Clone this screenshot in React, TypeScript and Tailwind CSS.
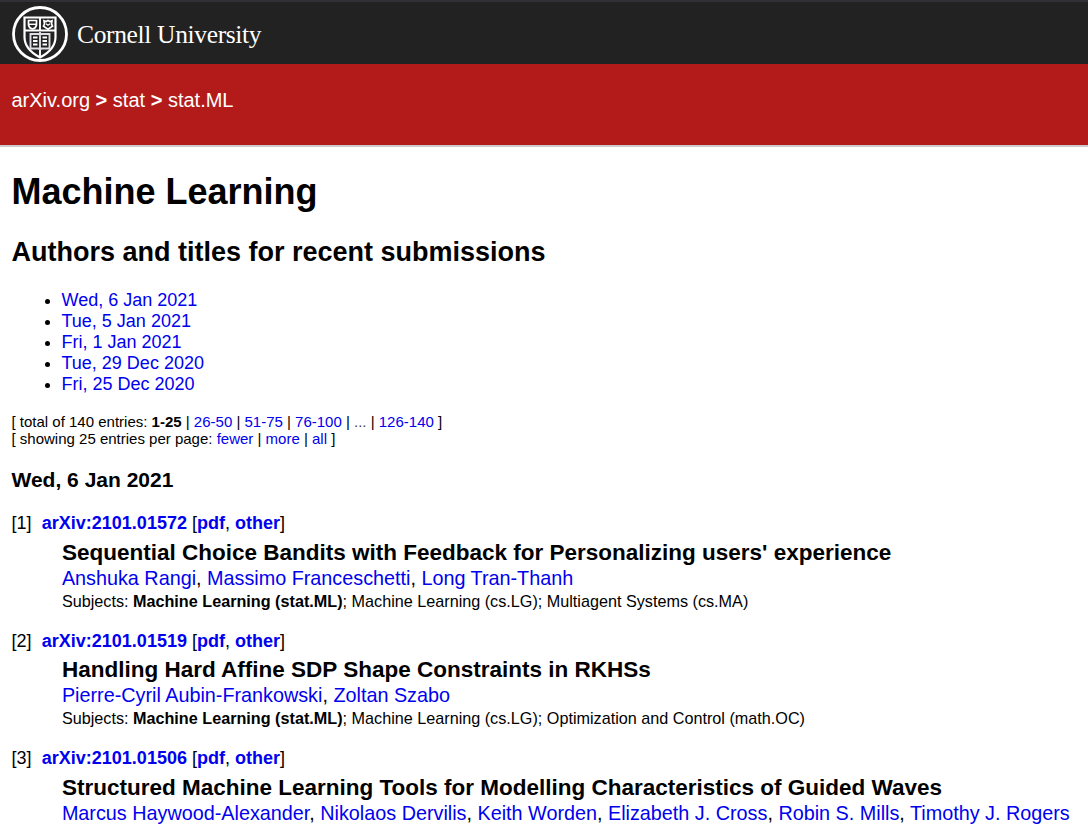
import type { ReactNode } from 'react';

function Seal() {
  return (
    <svg width="56" height="56" viewBox="0 0 56 56" fill="none" stroke="#fff" className="shrink-0">
      <circle cx="28" cy="28" r="26.5" strokeWidth="2.8" />
      <path d="M12.500 11.500h31v19.500c0 9.500-7 16-15.500 20.500c-8.500-4.500-15.500-11-15.500-20.500z" strokeWidth="2.200" />
      <path d="M12 24.500h32M28 11.500v14M28 42v9" strokeWidth="1.900" />
      <path d="M16.500 14.500h8v4.500q-.5 3-4 4q-3.500-1-4-4z" strokeWidth="1.700" />
      <path d="M17 18.300h7" strokeWidth="1.500" />
      <path d="M32 14.800l2 .7 2-1 2 1 2-.7-.5 3 1 2.500-4.500 3-4.500-3 1-2.500z" strokeWidth="1.700" />
      <path d="M34 17.800l2 1.500 2-1.500" strokeWidth="1.300" />
      <path d="M18.500 28h8l1.500 1 1.500-1h8v14.500h-8l-1.500 1-1.500-1h-8zM28 26v17" strokeWidth="1.900" stroke="#dedee4" />
      <path d="M21 31.500h4.500M21 35h4.500M21 38.500h4.500M30.500 31.500h4.500M30.500 35h4.500M30.500 38.500h4.500" strokeWidth="1.800" />
    </svg>
  );
}

function A({ children }: { children: ReactNode }) {
  return <a className="text-[#0000ee]">{children}</a>;
}

const dates = ['Wed, 6 Jan 2021', 'Tue, 5 Jan 2021', 'Fri, 1 Jan 2021', 'Tue, 29 Dec 2020', 'Fri, 25 Dec 2020'];

const entries = [
  {
    id: '2101.01572',
    title: "Sequential Choice Bandits with Feedback for Personalizing users' experience",
    authors: ['Anshuka Rangi', 'Massimo Franceschetti', 'Long Tran-Thanh'],
    subjects: 'Machine Learning (cs.LG); Multiagent Systems (cs.MA)',
  },
  {
    id: '2101.01519',
    title: 'Handling Hard Affine SDP Shape Constraints in RKHSs',
    authors: ['Pierre-Cyril Aubin-Frankowski', 'Zoltan Szabo'],
    subjects: 'Machine Learning (cs.LG); Optimization and Control (math.OC)',
  },
  {
    id: '2101.01506',
    title: 'Structured Machine Learning Tools for Modelling Characteristics of Guided Waves',
    authors: ['Marcus Haywood-Alexander', 'Nikolaos Dervilis', 'Keith Worden', 'Elizabeth J. Cross', 'Robin S. Mills', 'Timothy J. Rogers'],
    subjects: '',
  },
];

export default function App() {
  return (
    <div className="h-[828px] overflow-hidden bg-white font-['Liberation_Sans',Arial,sans-serif] whitespace-nowrap text-black">
      <header className="flex h-16 items-start border-t-2 border-[#303036] bg-[#222] pt-1 pl-3">
        <Seal />
        <span className="mt-[13px] ml-[9px] font-['Liberation_Serif',serif] text-[25.5px] leading-8 tracking-[-0.35px] text-white">Cornell University</span>
      </header>
      <nav className="h-[83px] border-b-2 border-[#ccc] bg-[#b31b1b] pt-6 pl-[11.5px] text-[20px] leading-6 text-white">
        arXiv.org <b>&gt;</b> stat <b>&gt;</b> stat.ML
      </nav>
      <main className="pl-[11.5px]">
        <h1 className="mt-6 text-[36px] leading-[41px] font-bold">Machine Learning</h1>
        <h2 className="mt-6 text-[27px] leading-8 font-bold">Authors and titles for recent submissions</h2>
        <ul className="mt-[22px] list-disc pl-[50px] text-[18px] leading-[21px]">
          {dates.map((d) => <li key={d}><A>{d}</A></li>)}
        </ul>
        <div className="mt-[18px] text-[15px] leading-[17px]">
          <div>[ total of 140 entries: <b>1-25</b> | <A>26-50</A> | <A>51-75</A> | <A>76-100</A> | <span className="text-[#454545]">...</span> | <A>126-140</A> ]</div>
          <div>[ showing 25 entries per page: <A>fewer</A> | <A>more</A> | <A>all</A> ]</div>
        </div>
        <h3 className="mt-[21px] text-[21px] leading-6 font-bold">Wed, 6 Jan 2021</h3>
        <dl className="mt-[21px]">
          {entries.map((e, i) => (
            <div key={e.id} className="h-[117.5px]">
              <dt className="text-[18px] leading-[21px]">
                <span className="inline-block w-[30.3px]">[{i + 1}]</span>
                <b><A>arXiv:{e.id}</A></b> [<b><A>pdf</A></b>, <b><A>other</A></b>]
              </dt>
              <dd className="ml-[50.4px]">
                <div className="mt-[5.8px] text-[22.5px] leading-[26px] font-bold">{e.title}</div>
                <div className="text-[19.8px] leading-6">
                  {e.authors.map((a, n) => <span key={a}>{n > 0 && ', '}<A>{a}</A></span>)}
                </div>
                {e.subjects && (
                  <div className="mt-[2px] text-[16.2px] leading-[18px]">Subjects: <b>Machine Learning (stat.ML)</b>; {e.subjects}</div>
                )}
              </dd>
            </div>
          ))}
        </dl>
      </main>
    </div>
  );
}
